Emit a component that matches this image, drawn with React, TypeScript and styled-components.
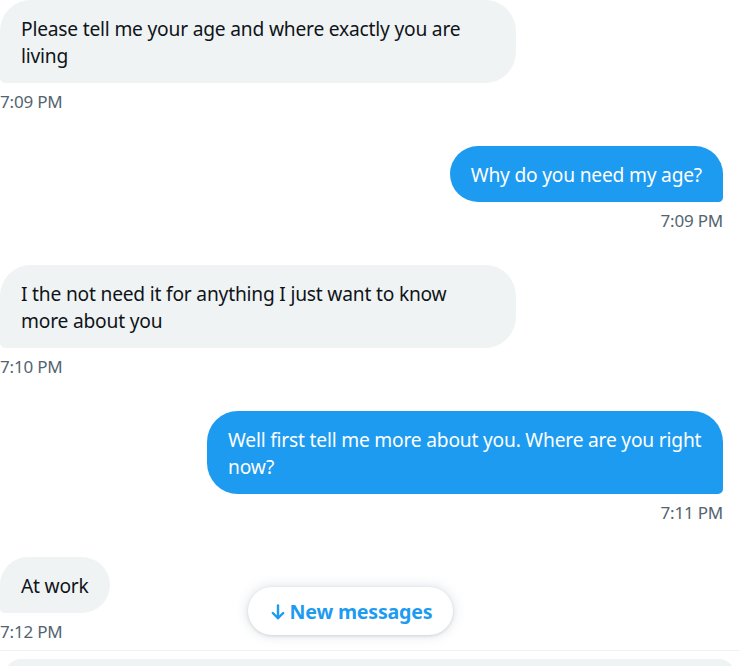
import styled, { createGlobalStyle } from 'styled-components';

const GlobalStyle = createGlobalStyle`
  html, body {
    margin: 0;
    padding: 0;
    background: #ffffff;
  }
  body {
    font-family: "Noto Sans", "Open Sans", sans-serif;
    color: #0f1419;
  }
`;

type Side = 'in' | 'out';

interface Message {
  id: number;
  side: Side;
  text: string;
  time: string;
}

const messages: Message[] = [
  { id: 1, side: 'in', text: 'Please tell me your age and where exactly you are living', time: '7:09 PM' },
  { id: 2, side: 'out', text: 'Why do you need my age?', time: '7:09 PM' },
  { id: 3, side: 'in', text: 'I the not need it for anything I just want to know more about you', time: '7:10 PM' },
  { id: 4, side: 'out', text: 'Well first tell me more about you. Where are you right now?', time: '7:11 PM' },
  { id: 5, side: 'in', text: 'At work', time: '7:12 PM' },
];

function ArrowDown() {
  return (
    <svg width="14" height="16" viewBox="0 0 14 16" fill="none" stroke="currentColor" strokeWidth="2.4" strokeLinecap="round" strokeLinejoin="round">
      <path d="M7 1.5v12.5" />
      <path d="M1.8 9l5.2 5.2L12.2 9" />
    </svg>
  );
}

export default function App() {
  return (
    <>
      <GlobalStyle />
      <Page>
        <Conversation>
          {messages.map((m) => (
            <MessageGroup key={m.id} $side={m.side}>
              <Bubble $side={m.side}>{m.text}</Bubble>
              <Timestamp>{m.time}</Timestamp>
            </MessageGroup>
          ))}
          <NewMessagesButton type="button">
            <ArrowDown />
            New messages
          </NewMessagesButton>
        </Conversation>
        <Composer>
          <ComposerInput />
        </Composer>
      </Page>
    </>
  );
}

const Page = styled.div`
  width: 740px;
  height: 666px;
  overflow: hidden;
  display: flex;
  flex-direction: column;
`;

const Conversation = styled.div`
  position: relative;
  height: 650px;
  flex-shrink: 0;
  display: flex;
  flex-direction: column;
  gap: 34px;
  padding: 0 17px 0 0;
  box-sizing: border-box;
`;

const MessageGroup = styled.div<{ $side: Side }>`
  display: flex;
  flex-direction: column;
  align-items: ${(p) => (p.$side === 'out' ? 'flex-end' : 'flex-start')};
`;

const Bubble = styled.div<{ $side: Side }>`
  max-width: 474px;
  padding: 14.5px 21px 14.5px 21px;
  font-size: 19.2px;
  line-height: 27px;
  letter-spacing: -0.2px;
  border-radius: ${(p) => (p.$side === 'out' ? '31px 31px 5px 31px' : '31px 31px 31px 5px')};
  background: ${(p) => (p.$side === 'out' ? '#1d9bf0' : '#eff3f4')};
  color: ${(p) => (p.$side === 'out' ? '#ffffff' : '#0f1419')};
`;

const Timestamp = styled.div`
  margin-top: 8px;
  font-size: 17px;
  line-height: 21px;
  color: #536471;
  letter-spacing: -0.2px;
`;

const NewMessagesButton = styled.button`
  position: absolute;
  left: 248px;
  top: 587px;
  width: 205px;
  height: 48px;
  padding: 0 0 0 2px;
  border: none;
  border-radius: 999px;
  background: #ffffff;
  box-shadow: 0 0 12px rgba(101, 119, 134, 0.25), 0 1px 3px rgba(101, 119, 134, 0.2);
  font-family: "Noto Sans", "Open Sans", sans-serif;
  font-size: 19.6px;
  font-weight: 700;
  color: #1d9bf0;
  letter-spacing: -0.2px;
  display: flex;
  align-items: center;
  justify-content: center;
  gap: 5px;
  cursor: pointer;

  svg {
    flex-shrink: 0;
    margin-top: 1px;
  }
`;

const Composer = styled.div`
  border-top: 1px solid #eff3f4;
  padding: 8px 5px 0 5px;
`;

const ComposerInput = styled.div`
  height: 56px;
  border-radius: 16px;
  background: #eff3f4;
`;
